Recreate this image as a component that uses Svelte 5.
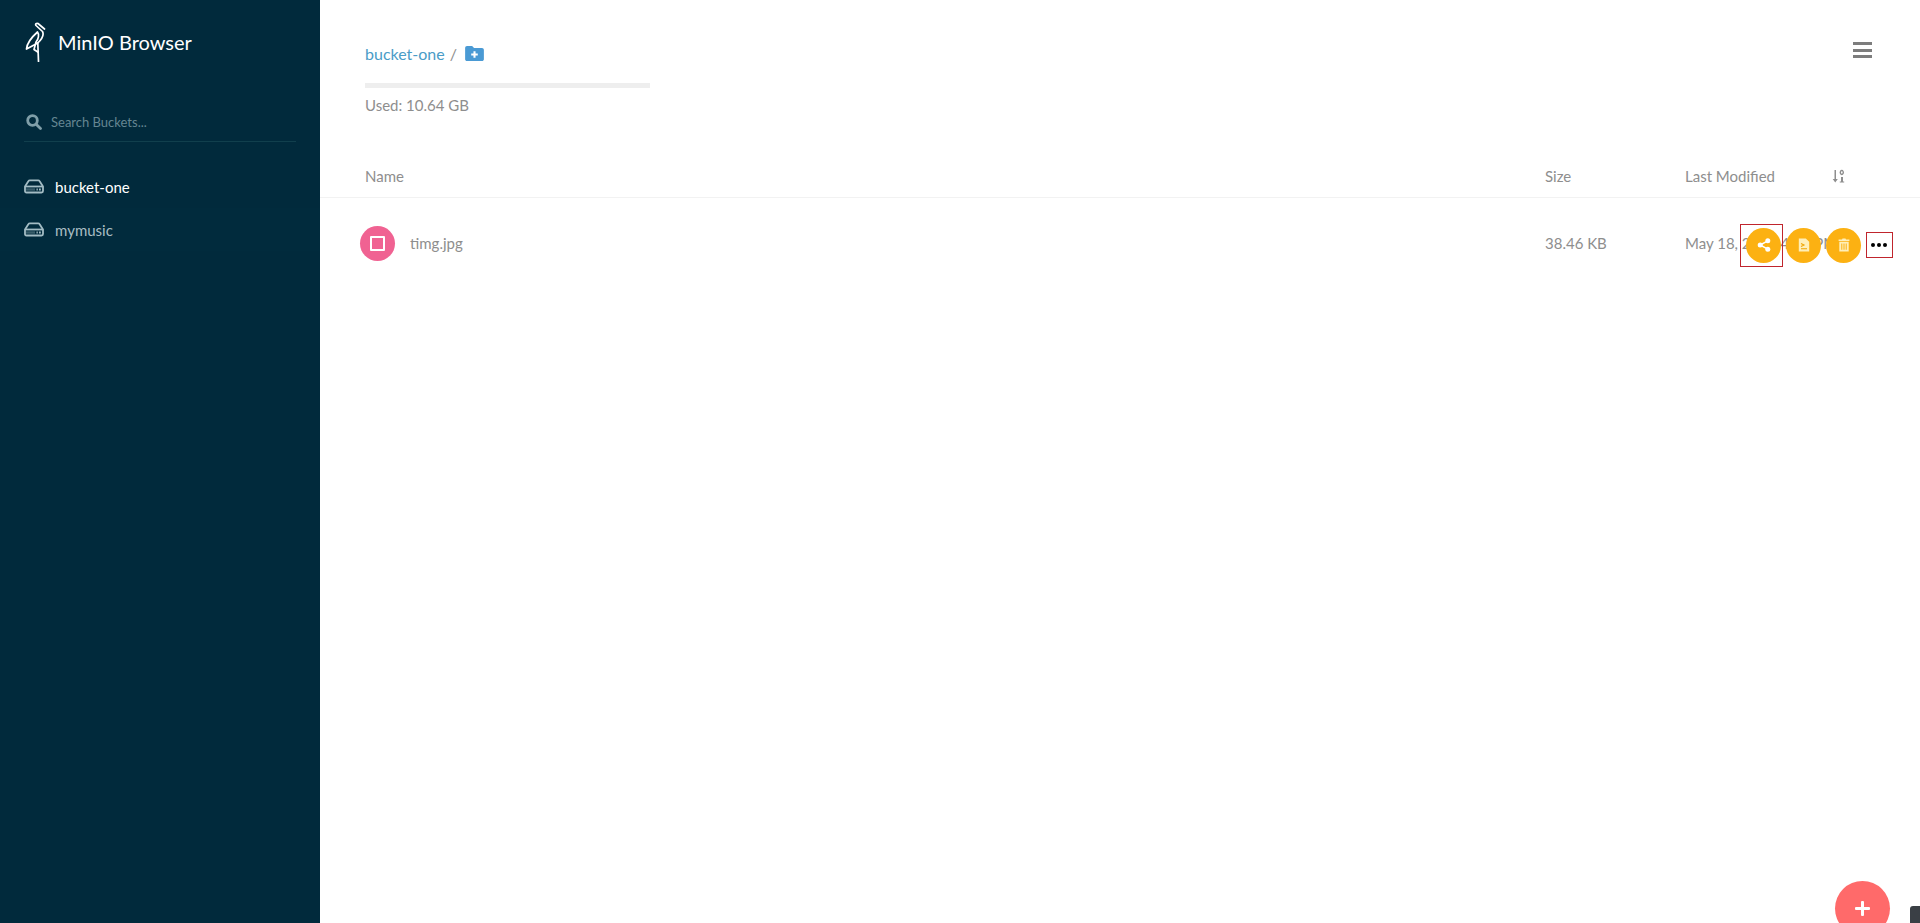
<script lang="ts">
  const buckets = [
    { name: 'bucket-one', active: true },
    { name: 'mymusic', active: false }
  ];
</script>

<div class="page">
  <aside class="sidebar">
    <header class="brand">
      <svg class="logo" viewBox="0 0 22 40" width="22" height="40" fill="none" stroke="#fff" stroke-width="1.700" stroke-linecap="round" stroke-linejoin="round">
        <path d="M13.500 39.500 L12.800 21 C17 17 19.500 13.500 17.500 9.500 L11 3.500 C10 2 11.500 .8 13 1.500 L19.500 7" />
        <path d="M12.800 21 L1.500 27 C2 20 8 14 12.500 10 C14.500 12.500 13.500 17 11 20 L9 27.500 L12.800 30" />
      </svg>
      <span class="brand-name">MinIO Browser</span>
    </header>

    <div class="search">
      <svg viewBox="0 0 16 16" width="16" height="16" fill="none" stroke="#7f9ea8" stroke-width="2.800" stroke-linecap="round">
        <circle cx="6.500" cy="6.500" r="4.800" />
        <path d="M10.400 10.400 L14.500 14.500" />
      </svg>
      <span>Search Buckets...</span>
    </div>

    <nav class="buckets">
      {#each buckets as bucket}
        <div class="bucket" class:active={bucket.active}>
          <svg viewBox="0 0 20 14" width="20" height="15" fill="none" stroke="currentColor" stroke-width="1.800">
            <path d="M1 7 L4.500 1.500 C4.800 1 5.200 .9 5.800 .9 H14.200 C14.800 .9 15.200 1 15.500 1.500 L19 7 V11.500 C19 12.500 18.500 13 17.500 13 H2.500 C1.500 13 1 12.500 1 11.500 Z" />
            <path d="M1 7 H19" />
            <path d="M2 10 H11" stroke-width="2.400" stroke-opacity=".35" />
            <path d="M12.500 10 H13.800 M15 10 H16.800" stroke-width="2" />
          </svg>
          <span>{bucket.name}</span>
        </div>
      {/each}
    </nav>
  </aside>

  <main class="content">
    <section class="top">
      <div class="summary">
        <div class="crumbs">
          <span class="crumb">bucket-one</span>
          <span class="slash">/</span>
          <svg viewBox="0 0 20 16" width="20" height="16">
            <path fill="#4a9ad4" d="M0 2 C0 .9 .9 0 2 0 H7.500 L9.500 2 H18 C19.100 2 20 2.900 20 4 V14 C20 15.100 19.100 16 18 16 H2 C.9 16 0 15.100 0 14 Z" />
            <path stroke="#fff" stroke-width="2.200" d="M10 5.500 V12.500 M6.500 9 H13.500" />
          </svg>
        </div>
        <div class="usage-bar"></div>
        <div class="usage">Used: 10.64 GB</div>
      </div>
      <button class="menu" aria-label="Menu"><i></i><i></i><i></i></button>
    </section>

    <div class="table-head">
      <span>Name</span>
      <span>Size</span>
      <span>Last Modified</span>
      <svg viewBox="0 0 14 14" width="14" height="14" fill="#8e8e8e">
        <path d="M2.500 1 H4 V10 H5.800 L3.250 13.500 L.7 10 H2.500 Z" />
        <path d="M9.800 .8 A2.200 2.700 0 1 1 9.790 .8 Z M9.800 2.300 A.8 1.200 0 1 0 9.810 2.300 Z" fill-rule="evenodd" />
        <path d="M9 8 H11 V12.500 H12.200 V13.600 H7.800 V12.500 H9 Z" />
      </svg>
    </div>

    <div class="file-row">
      <div class="file-name">
        <span class="file-icon"><i></i></span>
        <span>timg.jpg</span>
      </div>
      <span>38.46 KB</span>
      <span class="date">May 18, 2021 4:31 PM</span>

      <div class="actions">
        <span class="outlined share">
          <button class="action" aria-label="Share">
            <svg viewBox="0 0 14 14" width="14" height="14" fill="#fff">
              <circle cx="10.800" cy="2.800" r="2.500" />
              <circle cx="3.200" cy="7" r="2.500" />
              <circle cx="10.800" cy="11.200" r="2.500" />
              <path d="M3.200 7 L10.800 2.800 M3.200 7 L10.800 11.200" stroke="#fff" stroke-width="1.500" />
            </svg>
          </button>
        </span>
        <button class="action" aria-label="Preview">
          <svg viewBox="0 0 12 14" width="12" height="14" fill="none">
            <path d="M.8 .4 H7.800 L11.200 3.800 V13.600 H.8 Z" fill="#ffefb8" />
            <path d="M3 5.500 L6 7 L3 8.500 M3 10.800 H9" stroke="#f0a500" stroke-width="1.100" />
          </svg>
        </button>
        <button class="action" aria-label="Delete">
          <svg viewBox="0 0 12 14" width="12" height="14" fill="#ffefb8">
            <path d="M.6 1.500 H4 L4.500 .6 H7.500 L8 1.500 H11.400 V3 H.6 Z" />
            <path fill-rule="evenodd" d="M1.300 3.800 H10.700 V13.400 H1.300 Z M3.300 5.500 V11.800 H4.300 V5.500 Z M5.500 5.500 V11.800 H6.500 V5.500 Z M7.700 5.500 V11.800 H8.700 V5.500 Z" />
          </svg>
        </button>
        <span class="outlined dots"><i></i><i></i><i></i></span>
      </div>
    </div>
  </main>

  <button class="fab" aria-label="Add"></button>
  <div class="corner"></div>
</div>

<style>
  :global(body) {
    margin: 0;
    background: #fff;
    overflow: hidden;
  }
  .page {
    display: flex;
    height: 923px;
    overflow: hidden;
    position: relative;
    font-family: Lato, "Open Sans", sans-serif;
    font-size: 15px;
    color: #8e8e8e;
  }
  .sidebar {
    width: 320px;
    flex-shrink: 0;
    background: #012a3c;
    padding: 0 24px;
    box-sizing: border-box;
  }
  .brand {
    display: flex;
    align-items: center;
    gap: 11px;
    height: 84px;
    margin-left: 1px;
  }
  .brand-name {
    color: #fff;
    font-size: 20px;
    line-height: 1;
    padding-bottom: 1px;
  }
  .search {
    display: flex;
    align-items: center;
    gap: 9px;
    margin-top: 23px;
    height: 30px;
    padding: 0 0 4px 2px;
    border-bottom: 1px solid #113f4d;
    font-size: 13px;
    color: #658692;
  }
  .search svg {
    flex-shrink: 0;
    margin-top: -1px;
  }
  .buckets {
    margin: 23px -24px 0;
  }
  .bucket {
    display: flex;
    align-items: center;
    gap: 11px;
    height: 43px;
    padding-left: 24px;
    font-size: 15px;
    color: #a8bdc3;
  }
  .bucket svg {
    flex-shrink: 0;
    color: #a3bcc4;
  }
  .bucket.active {
    color: #fff;
  }
  .bucket:nth-child(2) {
    background: #012b3d;
  }
  .content {
    flex: 1;
    min-width: 0;
    position: relative;
  }
  .top {
    display: flex;
    justify-content: space-between;
    height: 152px;
    padding: 43px 47px 0 45px;
    box-sizing: border-box;
  }
  .crumbs {
    display: flex;
    align-items: center;
    height: 20px;
    font-size: 16px;
  }
  .crumbs svg {
    width: 19px;
    height: 15px;
  }
  .crumb {
    color: #4a9cc7;
  }
  .slash {
    margin: 0 8px 0 5px;
    color: #8e8e8e;
  }
  .usage-bar {
    width: 285px;
    height: 5px;
    background: #eee;
    margin-top: 20px;
  }
  .usage {
    margin-top: 8px;
    font-size: 15px;
  }
  .menu {
    display: flex;
    flex-direction: column;
    gap: 3.500px;
    width: 20px;
    height: 18px;
    padding: 0;
    margin-top: -1px;
    border: 0;
    background: none;
  }
  .menu i {
    display: block;
    height: 3px;
    width: 19px;
    background: #7d7d7d;
  }
  .table-head,
  .file-row {
    display: grid;
    grid-template-columns: 1180px 140px 150px 1fr;
    align-items: center;
    padding-left: 45px;
  }
  .table-head {
    height: 46px;
    padding-top: 2px;
    border-bottom: 1px solid #f2f2f2;
    box-sizing: border-box;
    font-size: 15px;
  }
  .table-head svg {
    margin-left: -3px;
  }
  .file-row {
    position: relative;
    height: 90px;
    font-size: 15px;
  }
  .date {
    white-space: nowrap;
  }
  .file-name {
    display: flex;
    align-items: center;
    gap: 15px;
    margin-left: -5px;
    color: #8e8e8e;
  }
  .file-icon {
    display: flex;
    align-items: center;
    justify-content: center;
    width: 35px;
    height: 35px;
    border-radius: 50%;
    background: #f06292;
  }
  .file-icon i {
    width: 11px;
    height: 11px;
    border: 2px solid #fff;
    border-radius: 1px;
  }
  .actions {
    position: absolute;
    top: 0;
    right: 27px;
    height: 90px;
    display: flex;
    align-items: center;
    gap: 5px;
    padding-top: 4px;
    box-sizing: border-box;
  }
  .action {
    display: flex;
    align-items: center;
    justify-content: center;
    width: 35px;
    height: 35px;
    padding: 0;
    border: 0;
    border-radius: 50%;
    background: #fcb112;
  }
  .outlined {
    display: flex;
    align-items: center;
    justify-content: center;
    border: 1px solid #c0252d;
    box-sizing: border-box;
  }
  .share {
    width: 43px;
    height: 43px;
    margin-right: -2px;
  }
  .share .action {
    margin-left: 4px;
  }
  .dots {
    width: 27px;
    height: 26px;
    gap: 2px;
    padding-right: 2px;
  }
  .dots i {
    width: 4px;
    height: 4px;
    border-radius: 50%;
    background: #000;
  }
  .fab {
    position: absolute;
    left: 1835px;
    top: 881px;
    width: 55px;
    height: 55px;
    padding: 0;
    border: 0;
    border-radius: 50%;
    background: #ff6a6a;
  }
  .fab::before,
  .fab::after {
    content: "";
    position: absolute;
    background: #fff;
    border-radius: 1px;
  }
  .fab::before {
    left: 20px;
    top: 26px;
    width: 15px;
    height: 3px;
  }
  .fab::after {
    left: 26px;
    top: 20px;
    width: 3px;
    height: 15px;
  }
  .corner {
    position: absolute;
    left: 1910px;
    top: 906px;
    width: 14px;
    height: 20px;
    background: #3a3f45;
    border-radius: 3px 0 0 0;
  }
</style>
